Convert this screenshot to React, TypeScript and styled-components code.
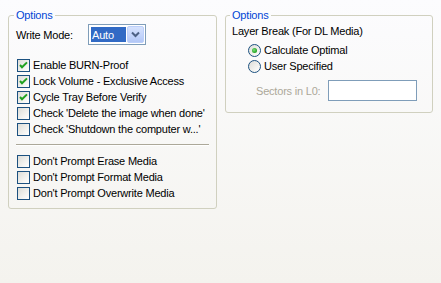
import React from "react";
import styled, { createGlobalStyle } from "styled-components";

const Global = createGlobalStyle`
  html, body { margin: 0; padding: 0; }
  body {
    width: 441px;
    height: 283px;
    overflow: hidden;
    background: linear-gradient(to bottom, #fcfcfe 0%, #f4f3ee 100%);
    font-family: "Liberation Sans", Arial, sans-serif;
    font-size: 11px;
    letter-spacing: -0.2px;
    color: #000;
  }
`;

const Page = styled.div`
  display: flex;
  align-items: flex-start;
  gap: 8px;
  padding: 9px 0 0 8px;
`;

const Group = styled.fieldset<{ $w: number; $h: number; $pl: number }>`
  box-sizing: border-box;
  margin: 0;
  min-width: 0;
  width: ${(p) => p.$w}px;
  height: ${(p) => p.$h}px;
  padding: 0 8px 0 ${(p) => p.$pl}px;
  border: 1px solid #d0d0bf;
  border-radius: 3px;
  display: flex;
  flex-direction: column;
`;

const Legend = styled.legend`
  color: #0046d5;
  padding: 0 2px;
  margin-left: -2px;
  line-height: 13px;
  height: 13px;
`;

const ModeRow = styled.div`
  display: flex;
  align-items: center;
  margin-top: 2px;
  height: 21px;
`;

const ModeLabel = styled.span`
  width: 72px;
`;

const Combo = styled.div`
  box-sizing: border-box;
  width: 58px;
  height: 21px;
  border: 1px solid #7f9db9;
  background: #fff;
  display: flex;
  align-items: stretch;
  padding: 2px 1px 1px 2px;
  gap: 1px;
`;

const ComboValue = styled.div`
  flex: 1;
  background: #316ac5;
  color: #fff;
  display: flex;
  align-items: center;
  padding-left: 1px;
  margin-bottom: 1px;
`;

const ComboButton = styled.div`
  width: 17px;
  margin-top: -1px;
  box-sizing: border-box;
  border: 1px solid #bccffa;
  border-radius: 2px;
  background: linear-gradient(to bottom, #d6e2fd 0%, #c2d3fb 60%, #b3c7f6 100%);
  display: flex;
  align-items: center;
  justify-content: center;
`;

const List = styled.div<{ $mt: number }>`
  display: flex;
  flex-direction: column;
  margin-top: ${(p) => p.$mt}px;
`;

const Row = styled.label<{ $indent?: number }>`
  display: flex;
  align-items: center;
  height: 16px;
  gap: 3px;
  padding-left: ${(p) => p.$indent ?? 1}px;
  white-space: nowrap;
`;

const Box = styled.span`
  box-sizing: border-box;
  width: 13px;
  height: 13px;
  flex: none;
  border: 1px solid #1c5180;
  background: linear-gradient(135deg, #dcdcd7 0%, #f2f2ef 60%, #ffffff 100%);
  display: flex;
  align-items: center;
  justify-content: center;
`;

const Radio = styled.span`
  box-sizing: border-box;
  width: 13px;
  height: 13px;
  flex: none;
  border-radius: 50%;
  border: 1px solid #1c5180;
  background: linear-gradient(135deg, #dcdcd7 0%, #f2f2ef 60%, #ffffff 100%);
  display: flex;
  align-items: center;
  justify-content: center;
`;

const Dot = styled.span`
  width: 5px;
  height: 5px;
  border-radius: 50%;
  background: radial-gradient(circle at 40% 40%, #7be07b 0%, #21a121 70%, #1a8f1a 100%);
`;

const Separator = styled.div`
  height: 0;
  border-top: 1px solid #aca899;
  border-bottom: 1px solid #ffffff;
  margin: 7px 0 7px 0;
  width: 193px;
`;

const Caption = styled.div`
  margin-top: 3px;
  line-height: 13px;
`;

const SectorRow = styled.div`
  display: flex;
  align-items: center;
  margin-top: 6px;
  padding-left: 24px;
  height: 21px;
`;

const Muted = styled.span`
  color: #aca899;
  width: 72px;
`;

const Field = styled.div`
  box-sizing: border-box;
  width: 89px;
  height: 21px;
  border: 1px solid #7f9db9;
  background: #fff;
`;

const Check = () => (
  <svg width="9" height="9" viewBox="0 0 9 9">
    <path d="M1 4 L3 6.2 L8 1.4" fill="none" stroke="#21a121" strokeWidth="2" />
  </svg>
);

const Chevron = () => (
  <svg width="9" height="7" viewBox="0 0 9 7">
    <path d="M1 1.5 L4.5 5 L8 1.5" fill="none" stroke="#4d6185" strokeWidth="2" />
  </svg>
);

const CheckRow = ({ label, checked }: { label: string; checked?: boolean }) => (
  <Row>
    <Box>{checked && <Check />}</Box>
    <span>{label}</span>
  </Row>
);

const RadioRow = ({ label, checked }: { label: string; checked?: boolean }) => (
  <Row $indent={16}>
    <Radio>{checked && <Dot />}</Radio>
    <span>{label}</span>
  </Row>
);

export default function App() {
  return (
    <>
      <Global />
      <Page>
        <Group $w={209} $h={200} $pl={7}>
          <Legend>Options</Legend>
          <ModeRow>
            <ModeLabel>Write Mode:</ModeLabel>
            <Combo>
              <ComboValue>Auto</ComboValue>
              <ComboButton>
                <Chevron />
              </ComboButton>
            </Combo>
          </ModeRow>
          <List $mt={12}>
            <CheckRow label="Enable BURN-Proof" checked />
            <CheckRow label="Lock Volume - Exclusive Access" checked />
            <CheckRow label="Cycle Tray Before Verify" checked />
            <CheckRow label="Check 'Delete the image when done'" />
            <CheckRow label="Check 'Shutdown the computer w...'" />
          </List>
          <Separator />
          <List $mt={0}>
            <CheckRow label="Don't Prompt Erase Media" />
            <CheckRow label="Don't Prompt Format Media" />
            <CheckRow label="Don't Prompt Overwrite Media" />
          </List>
        </Group>
        <Group $w={208} $h={104} $pl={6}>
          <Legend>Options</Legend>
          <Caption>Layer Break (For DL Media)</Caption>
          <List $mt={4}>
            <RadioRow label="Calculate Optimal" checked />
            <RadioRow label="User Specified" />
          </List>
          <SectorRow>
            <Muted>Sectors in L0:</Muted>
            <Field />
          </SectorRow>
        </Group>
      </Page>
    </>
  );
}
